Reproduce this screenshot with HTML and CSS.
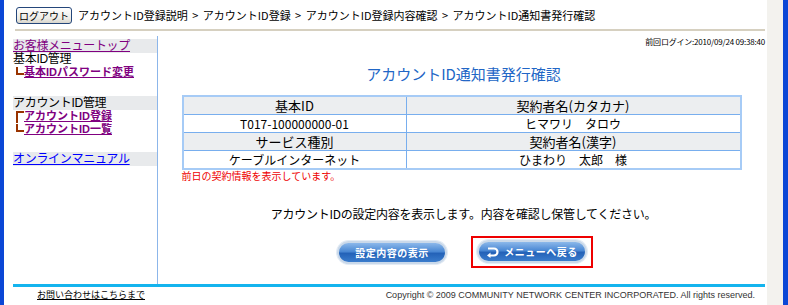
FILE: index.html
```html
<!DOCTYPE html>
<html lang="ja">

<head>
    <meta charset="UTF-8">
    <title>アカウントID通知書発行確認</title>
    <link rel="stylesheet" href="styles.css">
</head>

<body>
    <div class="window">
        <div class="page">
            <div class="topbar">
                <button class="logout" type="button">ログアウト</button>
                <div class="crumbs">
                    アカウントID登録説明 <span class="sep">&gt;</span> アカウントID登録 <span class="sep">&gt;</span> アカウントID登録内容確認 <span class="sep">&gt;</span> アカウントID通知書発行確認
                </div>
            </div>

            <div class="main">
                <div class="side">
                    <a href="#" class="menu-head visited">お客様メニュートップ</a>
                    <div class="menu-label">基本ID管理</div>
                    <a href="#" class="menu-sub last">基本IDパスワード変更</a>

                    <div class="menu-label group">アカウントID管理</div>
                    <a href="#" class="menu-sub mid">アカウントID登録</a>
                    <a href="#" class="menu-sub last">アカウントID一覧</a>

                    <a href="#" class="menu-head manual">オンラインマニュアル</a>
                </div>

                <div class="content">
                    <div class="last-login">前回ログイン:2010/09/24 09:38:40</div>
                    <h1 class="title">アカウントID通知書発行確認</h1>

                    <div class="info">
                        <table class="info-table">
                            <tr>
                                <th class="col-id">基本ID</th>
                                <th>契約者名(カタカナ)</th>
                            </tr>
                            <tr>
                                <td>T017-100000000-01</td>
                                <td>ヒマワリ　タロウ</td>
                            </tr>
                            <tr>
                                <th>サービス種別</th>
                                <th>契約者名(漢字)</th>
                            </tr>
                            <tr>
                                <td>ケーブルインターネット</td>
                                <td>ひまわり　太郎　様</td>
                            </tr>
                        </table>
                        <div class="note">前日の契約情報を表示しています。</div>
                    </div>

                    <p class="message">アカウントIDの設定内容を表示します。内容を確認し保管してください。</p>

                    <div class="actions">
                        <a href="#" class="pill">設定内容の表示</a>
                        <div class="focus-box">
                            <a href="#" class="pill">
                                <svg class="back-icon" width="14" height="12" viewBox="0 0 14 12">
                                    <path d="M2 2.5 H8 A3.5 3.5 0 0 1 8 9.5 H3" fill="none" stroke="#fff" stroke-width="2.2" />
                                    <path d="M1 9.5 L4.5 6.5 L4.5 12 Z" fill="#fff" />
                                </svg>
                                メニューへ戻る
                            </a>
                        </div>
                    </div>
                </div>
            </div>

            <div class="footer">
                <a href="#" class="contact">お問い合わせはこちらまで</a>
                <span class="copyright">Copyright © 2009 COMMUNITY NETWORK CENTER INCORPORATED. All rights reserved.</span>
            </div>
        </div>
        <div class="scroll"></div>
    </div>
</body>

</html>
```

FILE: styles.css
```css
:root {
    --frame: #0b47d6;
    --line: #8cb6ea;
    --band: #e8eaec;
    --title: #2166c6;
    --visited: #800080;
    --tree: #993300;
}

body {
    margin: 0;
    font-family: "Noto Sans CJK JP", sans-serif;
    font-size: 12px;
    color: #000;
    background: #fff;
}

.window {
    display: flex;
    height: 305px;
    border-left: 4px solid var(--frame);
    border-right: 5px solid var(--frame);
    overflow: hidden;
}

.page {
    flex: 1;
    padding: 0 2px 0 9px;
}

.scroll {
    width: 16px;
    background: #f3f2ee;
}

/* top bar */
.topbar {
    display: flex;
    align-items: center;
    gap: 6px;
    height: 29px;
    margin-left: 2px;
    padding-left: 1px;
    border-bottom: 2px solid #d6d0c0;
}

.logout {
    width: 56px;
    height: 17px;
    padding: 0;
    font-family: inherit;
    font-size: 10px;
    line-height: 13px;
    white-space: nowrap;
    color: #000;
    background: linear-gradient(#ffffff, #ecebe6 70%, #d8d5cc);
    border: 1px solid #24467a;
    border-radius: 3px;
    margin-top: 1px;
}

.crumbs {
    font-size: 11px;
    line-height: 14px;
    white-space: nowrap;
}

.sep {
    padding: 0 2px;
}

/* layout */
.main {
    display: flex;
    height: 253px;
}

.side {
    width: 144px;
    margin-top: 5px;
    padding-top: 3px;
    border-right: 1px solid var(--line);
    font-family: "Liberation Sans", "Noto Sans CJK JP", sans-serif;
    font-size: 12px;
    line-height: 13px;
}

.side a,
.side div {
    display: block;
    white-space: nowrap;
    height: 13px;
}

.menu-head {
    background: var(--band);
    padding: 1px 0 0;
    color: #0000ff;
    letter-spacing: -0.3px;
}

.menu-head.visited {
    color: var(--visited);
}

.menu-head.manual {
    margin-top: 16px;
}

.menu-label {
    letter-spacing: -0.3px;
}

.menu-label.group {
    margin-top: 17px;
    background: var(--band);
    padding-top: 1px;
}

.menu-sub {
    position: relative;
    padding-left: 11px;
    font-size: 11px;
    font-weight: bold;
    color: var(--visited);
}

.menu-sub::before {
    content: "";
    position: absolute;
    left: 3px;
    top: 1px;
    width: 6px;
    height: 6px;
    border-left: 2px solid var(--tree);
    border-bottom: 2px solid var(--tree);
}

.menu-sub.mid::before {
    height: 12px;
    border-bottom: none;
}

.menu-sub.mid::after {
    content: "";
    position: absolute;
    left: 3px;
    top: 1px;
    width: 8px;
    height: 2px;
    background: var(--tree);
}

/* content */
.content {
    flex: 1;
    min-width: 0;
}

.last-login {
    text-align: right;
    font-size: 8px;
    line-height: 10px;
    margin-top: 6px;
    letter-spacing: -0.2px;
}

.title {
    margin: 18px 0 0;
    text-align: center;
    font-size: 15px;
    font-weight: normal;
    line-height: 18px;
    color: var(--title);
    padding-left: 4px;
}

.info {
    width: 560px;
    margin: 12px auto 0;
}

.info-table {
    width: 100%;
    border-collapse: collapse;
    border: 2px solid #a6cbf6;
}

.info-table th,
.info-table td {
    border: 1px solid #78aeee;
    height: 17px;
    padding: 0;
    text-align: center;
    font-size: 12px;
    line-height: 16px;
}

.info-table th {
    background: #eceef0;
    font-weight: normal;
    font-size: 13px;
}

.col-id {
    width: 222px;
}

.note {
    color: #ee0000;
    font-size: 10px;
    line-height: 12px;
}

.message {
    margin: 25px 0 0;
    text-align: center;
    font-size: 12px;
    line-height: 14px;
    letter-spacing: -0.25px;
    padding-left: 4px;
}

.actions {
    display: flex;
    justify-content: center;
    align-items: center;
    gap: 24px;
    margin-top: 15px;
    padding-left: 7px;
}

.focus-box {
    padding: 2px 4px 3px;
    border: 2px solid #ee0000;
}

.pill {
    display: flex;
    align-items: center;
    justify-content: center;
    gap: 4px;
    width: 106px;
    height: 19px;
    border: 2px solid #cad9ea;
    border-radius: 12px;
    background: linear-gradient(#8cb8ea 0%, #4a88d4 45%, #2462b8 55%, #3a7ccc 100%);
    box-shadow: 0 0 0 1px #e4ecf5;
    color: #fff;
    font-size: 10px;
    font-weight: bold;
    text-decoration: none;
    letter-spacing: 0.5px;
}

.back-icon {
    flex: none;
}

/* footer */
.footer {
    display: flex;
    justify-content: space-between;
    align-items: center;
    border-top: 3px solid #14b4ee;
    height: 16px;
    font-size: 9px;
    line-height: 12px;
}

.contact {
    margin-left: 24px;
    color: #000;
}

.copyright {
    font-family: "Liberation Sans", sans-serif;
    color: #333;
    margin-right: 10px;
}
```
